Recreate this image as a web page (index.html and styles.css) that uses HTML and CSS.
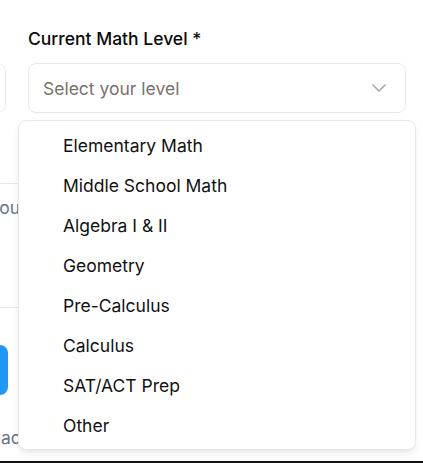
FILE: index.html
```html
<!DOCTYPE html>
<html lang="en">
<head>
<meta charset="utf-8">
<link rel="stylesheet" href="styles.css">
</head>
<body>
<div class="page">
  <div class="form">
    <div class="left">
      <div class="left-inner">
        <div class="ghost-input"></div>
        <div class="divider first"></div>
        <p class="hint">Tell us about you</p>
        <div class="divider second"></div>
        <div class="btn"></div>
        <p class="hint foot">Back to your workspace</p>
      </div>
    </div>
    <div class="field">
      <label class="label">Current Math Level *</label>
      <div class="select">
        <span class="placeholder">Select your level</span>
        <svg class="chev" width="24" height="24" viewBox="0 0 24 24" fill="none" stroke="currentColor" stroke-width="1.6" stroke-linecap="round" stroke-linejoin="round"><path d="m6 9 6 6 6-6"/></svg>
      </div>
    </div>
  </div>
  <ul class="menu">
    <li class="item">Elementary Math</li>
    <li class="item">Middle School Math</li>
    <li class="item">Algebra I &amp; II</li>
    <li class="item">Geometry</li>
    <li class="item">Pre-Calculus</li>
    <li class="item">Calculus</li>
    <li class="item">SAT/ACT Prep</li>
    <li class="item">Other</li>
  </ul>
</div>
<div class="bottom-bar"></div>
</body>
</html>
```
FILE: styles.css
```css
html, body {
  margin: 0;
  padding: 0;
  background: #ffffff;
  height: 463px;
  overflow: hidden;
  font-family: Inter, "Noto Sans", sans-serif;
}
body {
  display: flex;
  flex-direction: column;
}
.page {
  position: relative;
  height: 461px;
  flex: none;
}
.form {
  display: flex;
  gap: 21px;
}
.left {
  width: 7px;
  flex: none;
}
.left-inner {
  width: 200px;
  margin-left: -193px;
  padding-top: 63px;
}
.ghost-input {
  height: 48px;
  border: 1px solid #e5e7eb;
  border-radius: 8px;
  margin-right: 1px;
}
.divider {
  border-top: 1px solid #e5e7eb;
  margin-right: -20px;
}
.divider.first { margin-top: 70px; }
.hint {
  margin: 12px -20px 0 0;
  text-align: right;
  padding-right: 7px;
  white-space: nowrap;
  font-size: 17.5px;
  line-height: 24px;
  color: #5f7391;
}
.divider.second { margin-top: 87px; }
.btn {
  margin-top: 37px;
  height: 50px;
  background: #2196f3;
  border-radius: 8px;
  margin-right: -1px;
}
.hint.foot {
  margin-top: 31px;
  margin-right: -24px;
  padding-right: 0;
  color: #6b7280;
}
.field {
  width: 378px;
  flex: none;
  padding-top: 27px;
}
.label {
  display: block;
  font-size: 17.5px;
  line-height: 24px;
  font-weight: 500;
  color: #0a0a0a;
}
.select {
  margin-top: 12px;
  height: 48px;
  border: 1px solid #e5e7eb;
  border-radius: 8px;
  display: flex;
  align-items: center;
  justify-content: space-between;
  padding: 0 14px 0 14px;
}
.placeholder {
  font-size: 17.5px;
  color: #78716c;
}
.chev {
  color: #a8a8a8;
  display: block;
}
.menu {
  position: absolute;
  left: 18px;
  top: 120px;
  width: 396px;
  margin: 0;
  padding: 4px 0 4px;
  list-style: none;
  background: #ffffff;
  border: 1px solid #e5e7eb;
  border-radius: 8px;
  box-shadow: 0 4px 8px -2px rgba(0,0,0,0.10), 0 2px 4px -2px rgba(0,0,0,0.06);
}
.item {
  height: 40px;
  display: flex;
  align-items: center;
  padding-left: 44px;
  font-size: 17.5px;
  color: #111111;
}
.bottom-bar {
  height: 2px;
  background: #111111;
  flex: none;
}
```
